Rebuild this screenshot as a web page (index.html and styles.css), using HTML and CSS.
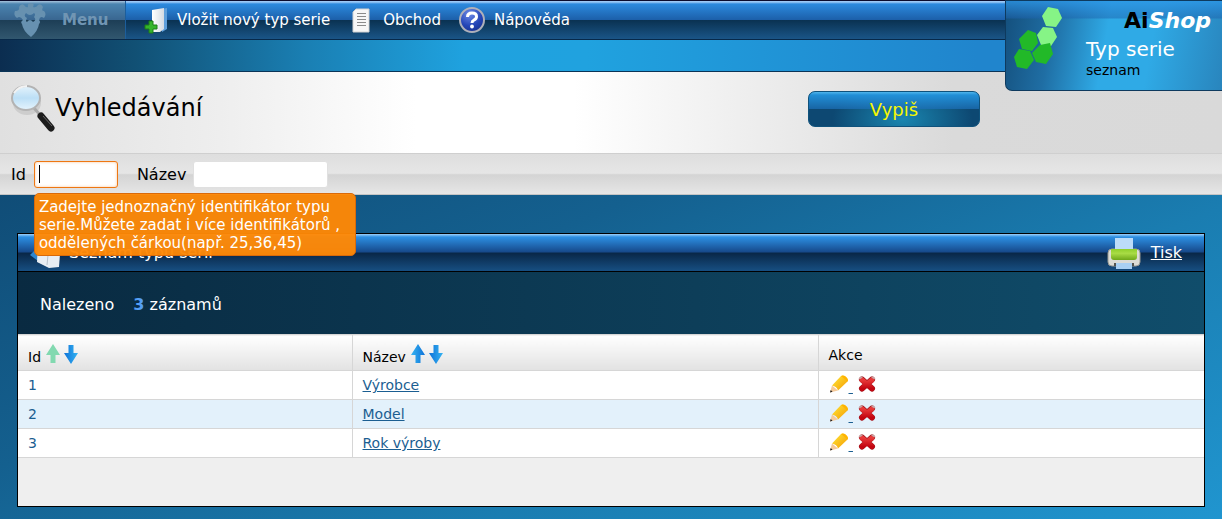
FILE: index.html
```html
<!DOCTYPE html>
<html lang="cs">
<head>
  <meta charset="UTF-8">
  <meta name="viewport" content="width=device-width, initial-scale=1.0">
  <title>AiShop - Typ serie</title>
  <link rel="stylesheet" href="styles.css">
</head>
<body>
  <!-- sdílené ikony -->
  <svg class="sprite" width="0" height="0" aria-hidden="true">
    <defs>
      <linearGradient id="g-arrow" x1="0" x2="1">
        <stop offset="0" stop-color="#35b4f2"/><stop offset="1" stop-color="#0f72d8"/>
      </linearGradient>
      <linearGradient id="g-pencil" x1="0" x2="1" y1="0" y2="1">
        <stop offset="0" stop-color="#ffe93a"/><stop offset="1" stop-color="#f59a00"/>
      </linearGradient>
      <linearGradient id="g-cross" x1="0" x2="0" y1="0" y2="1">
        <stop offset="0" stop-color="#e83a3a"/><stop offset="1" stop-color="#c40510"/>
      </linearGradient>
      <linearGradient id="g-page" x1="0" x2="1">
        <stop offset="0" stop-color="#ffffff"/><stop offset="1" stop-color="#d5dbe2"/>
      </linearGradient>
      <linearGradient id="g-green" x1="0" x2="0" y1="0" y2="1">
        <stop offset="0" stop-color="#8fcf2a"/><stop offset=".4" stop-color="#a9dc45"/><stop offset="1" stop-color="#6fa81a"/>
      </linearGradient>
      <radialGradient id="g-help" cx=".4" cy=".25" r=".8">
        <stop offset="0" stop-color="#6e8be6"/><stop offset=".6" stop-color="#2546b8"/><stop offset="1" stop-color="#16308f"/>
      </radialGradient>
      <linearGradient id="g-lens" x1="0" x2="0" y1="0" y2="1">
        <stop offset="0" stop-color="#e4f3fc"/><stop offset=".5" stop-color="#bcdff6"/><stop offset="1" stop-color="#e6f4fd"/>
      </linearGradient>
    </defs>
    <symbol id="i-arrow" viewBox="0 0 16 20">
      <path d="M8 0 L15 11 H10.500 V19 H5.500 V11 H1 Z"/>
    </symbol>
    <symbol id="i-pencil" viewBox="0 0 20 20">
      <path d="M1 17.500 L3 10.500 L9 15.500 Z" fill="#f5c99a"/>
      <path d="M1 17.500 L1.700 15 L3.500 16.700 Z" fill="#222"/>
      <path d="M3 10.500 L12 1 Q15 -.5 18 3 Q19.500 5 18.500 6.500 L9 15.500 Q8 11.500 3 10.500 Z" fill="url(#g-pencil)"/>
      <path d="M12 1 Q15 -.5 18 3 Q19.500 5 18.500 6.500 Z" fill="#ffb400"/>
    </symbol>
    <symbol id="i-cross" viewBox="0 0 20 20">
      <path d="M5 4.500 L15 13.500 M15 4.500 L5 13.500" stroke="#a3141c" stroke-width="6" stroke-linecap="round"/>
      <path d="M5 5 L15 13.500 M15 5 L5 13.500" stroke="url(#g-cross)" stroke-width="5" stroke-linecap="round"/>
      <path d="M2.500 3.500 L5 2 M15 2 L17.500 3.500" stroke="#c9a3a3" stroke-width="1.500" stroke-linecap="round"/>
    </symbol>
  </svg>

  <header class="top">
    <nav class="toolbar">
      <button class="menu-button" type="button" disabled>
        <svg width="34" height="34" viewBox="0 0 34 34" aria-hidden="true">
          <path d="M6 4 Q8 0 11 2 Q13 5 15 4 Q14 0 18 0 Q22 0 20 4 Q23 5 25 2 Q28 0 30 4 Q28 8 31 8 Q34 11 31 15 Q27 12 26 17 Q28 19 26 21 Q25 28 18 34 Q10 28 9 21 Q7 19 10 17 Q7 12 4 15 Q0 12 2 8 Q7 8 6 4 Z M13 10 Q10 13 14 15 Q12 18 14 19 Q17 15 20 19 Q24 17 21 14 Q23 11 21 10 Q17 14 13 10 Z" fill="#6791b0" fill-rule="evenodd"/>
        </svg>
        <span>Menu</span>
      </button>
      <a class="tool" href="#">
        <svg width="26" height="28" viewBox="0 0 26 28" aria-hidden="true">
          <path d="M19 3 L24 2 V23 L19 26 Z" fill="#5f9fdb"/>
          <path d="M9 4 L21 2 V23 L17 26 L9 26 Z" fill="url(#g-page)"/>
          <path d="M6 15 h4 v4 h4 v4 h-4 v4 h-4 v-4 h-4 v-4 h4 Z" fill="#35b52b" stroke="#1c7d18"/>
        </svg>
        <span>Vložit nový typ serie</span>
      </a>
      <a class="tool" href="#">
        <svg width="28" height="28" viewBox="0 0 28 28" aria-hidden="true">
          <path d="M9 3 H22 V26 H6 V6 Z" fill="#f7f7f7" stroke="#d2d2d2"/>
          <path d="M10 7.500 h9 M10 10.500 h9 M10 13.500 h9 M10 16.500 h9 M10 19.500 h9" stroke="#8b8b8b"/>
        </svg>
        <span>Obchod</span>
      </a>
      <a class="tool" href="#">
        <svg width="28" height="28" viewBox="0 0 28 28" aria-hidden="true">
          <circle cx="14" cy="14" r="12" fill="url(#g-help)" stroke="#aeb0ba" stroke-width="2"/>
          <path d="M9.500 11 Q9.500 7 14 7 Q18.500 7 18.500 10.500 Q18.500 13 16 14 Q14 15 14 17" fill="none" stroke="#fff" stroke-width="3"/>
          <circle cx="14" cy="20.500" r="1.900" fill="#fff"/>
        </svg>
        <span>Nápověda</span>
      </a>
    </nav>
    <div class="strip"></div>

    <div class="badge">
      <svg class="badge-logo" width="52" height="66" viewBox="0 0 52 66" aria-hidden="true">
        <g fill="#86f486">
          <path d="M34 0 L44 2 L48 11 L42 20 L32 19 L28 9 Z"/>
          <path d="M29 20 L39 21 L43 30 L37 39 L27 38 L23 28 Z"/>
        </g>
        <g fill="#22b928">
          <path d="M14 23 L22 26 L24 36 L18 44 L8 42 L5 32 Z"/>
          <path d="M26 38 L36 36 L39 47 L32 57 L22 55 L18 46 Z"/>
          <path d="M5 42 L16 44 L20 53 L13 62 L3 60 L0 50 Z"/>
        </g>
      </svg>
      <div class="badge-text">
        <div class="brand">Ai<em>Shop</em></div>
        <div class="badge-title">Typ serie</div>
        <div class="badge-sub">seznam</div>
      </div>
    </div>
  </header>

  <form class="search">
    <div class="search-head">
      <svg width="46" height="52" viewBox="0 0 46 52" aria-hidden="true">
        <ellipse cx="18" cy="19" rx="14" ry="12" fill="#cdcdcd"/>
        <path d="M25 24 L32 32" stroke="#aaa" stroke-width="3"/>
        <path d="M32 32 L42 44" stroke="#1d1d1d" stroke-width="7" stroke-linecap="round"/>
        <path d="M34 32 L43 42" stroke="#666"/>
        <ellipse cx="17" cy="14" rx="14" ry="12" fill="url(#g-lens)" stroke="#b3b3b3" stroke-width="2"/>
        <path d="M5 9 Q10 2 18 2" fill="none" stroke="#f2f2f2" stroke-width="2"/>
      </svg>
      <h1>Vyhledávání</h1>
      <button class="submit" type="submit">Vypiš</button>
    </div>
    <div class="filters">
      <label for="f-id">Id</label>
      <div class="field">
        <input class="input-id" id="f-id" type="text" aria-describedby="tip-id" autofocus>
        <div class="tip" id="tip-id" role="tooltip">Zadejte jednoznačný identifikátor typu serie.Můžete zadat i více identifikátorů , oddělených čárkou(např. 25,36,45)</div>
      </div>
      <label for="f-name">Název</label>
      <input class="input-name" id="f-name" type="text">
    </div>
  </form>

  <main class="panel">
    <div class="panel-head">
      <svg width="36" height="36" viewBox="0 0 36 36" aria-hidden="true">
        <path d="M2 20 L12 10 L20 18 L10 26 Z" fill="#2f86cf"/>
        <path d="M10 8 L33 6 L31 32 L21 33 L9 27 Z" fill="#e9eef3"/>
        <path d="M19 30 L20 20" stroke="#b9c2cb"/>
      </svg>
      <h2>Seznam typu serií</h2>
      <a class="print" href="#">
        <svg width="34" height="34" viewBox="0 0 34 34" aria-hidden="true">
          <rect x="1" y="13" width="32" height="17" rx="4" fill="#dcdcd6" stroke="#9a9a94"/>
          <rect x="8" y="2" width="18" height="13" fill="#bcdcf8"/>
          <path d="M4 13 H30 V21 Q30 24 27 24 H7 Q4 24 4 21 Z" fill="url(#g-green)"/>
          <rect x="7" y="27" width="20" height="3" fill="#55554f"/>
          <rect x="9" y="27" width="16" height="6" fill="#a9d0f3"/>
        </svg>
        <span>Tisk</span>
      </a>
    </div>
    <p class="found">Nalezeno <b>3</b> záznamů</p>
    <table class="list">
      <colgroup>
        <col class="col-id">
        <col class="col-name">
        <col class="col-action">
      </colgroup>
      <thead>
        <tr>
          <th>Id
            <a href="#" aria-label="Id vzestupně"><svg class="arrow active" width="16" height="20"><use href="#i-arrow"/></svg></a><a href="#" aria-label="Id sestupně"><svg class="arrow down" width="16" height="20"><use href="#i-arrow"/></svg></a>
          </th>
          <th>Název
            <a href="#" aria-label="Název vzestupně"><svg class="arrow" width="16" height="20"><use href="#i-arrow"/></svg></a><a href="#" aria-label="Název sestupně"><svg class="arrow down" width="16" height="20"><use href="#i-arrow"/></svg></a>
          </th>
          <th>Akce</th>
        </tr>
      </thead>
      <tbody>
        <tr>
          <td>1</td>
          <td><a href="#">Výrobce</a></td>
          <td class="actions">
            <a href="#" aria-label="Upravit"><svg width="20" height="20"><use href="#i-pencil"/></svg>&nbsp;</a>
            <a href="#" aria-label="Smazat"><svg width="20" height="20"><use href="#i-cross"/></svg></a>
          </td>
        </tr>
        <tr>
          <td>2</td>
          <td><a href="#">Model</a></td>
          <td class="actions">
            <a href="#" aria-label="Upravit"><svg width="20" height="20"><use href="#i-pencil"/></svg>&nbsp;</a>
            <a href="#" aria-label="Smazat"><svg width="20" height="20"><use href="#i-cross"/></svg></a>
          </td>
        </tr>
        <tr>
          <td>3</td>
          <td><a href="#">Rok výroby</a></td>
          <td class="actions">
            <a href="#" aria-label="Upravit"><svg width="20" height="20"><use href="#i-pencil"/></svg>&nbsp;</a>
            <a href="#" aria-label="Smazat"><svg width="20" height="20"><use href="#i-cross"/></svg></a>
          </td>
        </tr>
      </tbody>
    </table>
    <div class="panel-foot"></div>
  </main>
</body>
</html>
```
FILE: styles.css
```css
* {
  box-sizing: border-box;
}

html {
  min-height: 100%;
  background: linear-gradient(to bottom right, #0d3f66 0%, #14608f 45%, #1a7db1 70%, #2095cf 100%);
}

body {
  margin: 0;
  font-family: Verdana, "DejaVu Sans", sans-serif;
  font-size: 14px;
  color: #000;
}

h1,
h2,
p {
  margin: 0;
  font-weight: normal;
}

svg {
  flex: none;
}

.sprite {
  position: absolute;
}

/* horní lišta */
.top {
  position: relative;
}

.toolbar {
  display: flex;
  height: 40px;
  border-top: 1px solid #0b0b2c;
  border-bottom: 1px solid #07294a;
  background: linear-gradient(to bottom, #9cc8f5 0, #9cc8f5 1px, #2c8ade 3px, #1c5fa9 50%, #0a3252 51%, #1a5587 100%);
}

.menu-button {
  display: flex;
  align-items: center;
  gap: 15px;
  width: 126px;
  padding: 0 0 0 13px;
  border: 0;
  border-right: 1px solid #1c5e9c;
  background: linear-gradient(to bottom, #a9c4dc 0, #4b84b0 3px, #396690 50%, #1d3e56 51%, #31576f 100%);
  color: #7195b3;
  font: bold 15px Verdana, "DejaVu Sans", sans-serif;
}

.tool {
  display: flex;
  align-items: center;
  gap: 8px;
  margin-left: 17px;
  color: #fff;
  font-size: 15px;
  text-decoration: none;
}

.strip {
  height: 32px;
  border-bottom: 1px solid #0a3457;
  background: linear-gradient(to right, #0b2d50 0%, #115074 11%, #1a7fb3 25%, #1fa2df 38%, #20a2df 48%, #2085cd 80%);
}

.badge {
  position: absolute;
  top: 0;
  right: 0;
  display: flex;
  gap: 20px;
  width: 217px;
  height: 91px;
  padding: 6px 11px 0 8px;
  border: 1px solid #0e3a5e;
  border-right: 0;
  border-radius: 0 0 0 7px;
  background:
    linear-gradient(to bottom, rgba(45, 150, 230, .8), rgba(30, 100, 175, .5) 17px, transparent 18px),
    linear-gradient(100deg, #144f7c 0%, #1f6ea4 22%, #2faae6 46%, #2faae6 66%, #2985bd 100%);
}

.badge-text {
  flex: 1;
}

.brand {
  text-align: right;
  font-size: 22px;
  font-weight: bold;
  line-height: 28px;
}

.brand em {
  color: #fff;
}

.badge-title {
  color: #fff;
  font-size: 20px;
  line-height: 28px;
}

.badge-sub {
  line-height: 14px;
}

/* vyhledávání */
.search-head {
  display: flex;
  align-items: flex-start;
  height: 82px;
  padding: 12px 242px 0 9px;
  border-bottom: 1px solid #cfcfcf;
  background: linear-gradient(to right, #e0e0e0 0%, #eee 18%, #fff 34%, #fff 47%, #dadada 78%, #d9d9d9 100%);
}

.search-head h1 {
  font-size: 24px;
  line-height: 48px;
}

.submit {
  width: 172px;
  height: 36px;
  margin: 7px 0 0 auto;
  border: 1px solid #0f527c;
  border-radius: 7px;
  background:
    linear-gradient(to bottom, #4fb5ec 0, rgba(35, 150, 225, .9) 3px, rgba(28, 110, 180, .75) 50%, transparent 51%),
    radial-gradient(ellipse 70px 40px at 55% 80%, #1a86b0, #0d4872);
  color: #f7f700;
  font: 18px Verdana, "DejaVu Sans", sans-serif;
}

.filters {
  display: flex;
  align-items: center;
  height: 41px;
  padding: 0 11px;
  border-bottom: 1px solid #c4c4c4;
  background: linear-gradient(to bottom, #dedede, #e6e6e6 48%, #d4d4d4 52%, #e6e6e6);
  font-size: 16px;
}

.filters input {
  height: 27px;
  padding: 1px 4px;
  border: 1px solid #e0e0e0;
  border-radius: 3px;
  background: #fff;
  font: 16px Verdana, "DejaVu Sans", sans-serif;
}

.filters input:focus {
  outline: 0;
  border-color: #ee7712;
  box-shadow: inset 0 0 3px #f9c698;
}

/* kurzor v prázdném poli */
.filters .input-id:focus:placeholder-shown,
.filters .input-id:focus {
  background: #fff linear-gradient(#000, #000) 4px center / 1px 18px no-repeat;
  caret-color: transparent;
}

.field {
  position: relative;
  display: flex;
  margin: 0 19px 0 8px;
}

.filters .input-id {
  width: 84px;
}

.filters .input-name {
  width: 135px;
  margin-left: 7px;
}

.tip {
  position: absolute;
  z-index: 2;
  top: 32px;
  left: 0;
  width: 322px;
  padding: 4px 4px 3px;
  border: 1px solid #d96a0a;
  border-radius: 5px;
  background: rgba(255, 136, 5, .96);
  color: #fff;
  font-size: 15px;
  line-height: 18px;
}

/* seznam */
.panel {
  margin: 38px 17px 12px;
  border: 1px solid #000;
}

.panel-head {
  display: flex;
  align-items: center;
  height: 38px;
  padding: 0 22px 0 10px;
  border-bottom: 1px solid #000;
  background: linear-gradient(to bottom, #9fd0f8 0, #2c8fe2 3px, #174a8c 48%, #092748 52%, #174f82 100%);
  color: #fff;
}

.panel-head h2 {
  margin-left: 5px;
  font-size: 16px;
}

.print {
  display: flex;
  align-items: center;
  gap: 10px;
  margin-left: auto;
  color: #fff;
  font-size: 16px;
}

.found {
  padding: 3px 22px 0;
  background: linear-gradient(to right, #092a41, #104d6b);
  color: #fff;
  font-size: 16px;
  line-height: 59px;
}

.found b {
  margin-left: 14px;
  color: #559ff5;
}

.list {
  width: 100%;
  border-collapse: collapse;
  table-layout: fixed;
  background: #fff;
  line-height: 18px;
}

.col-id {
  width: 334px;
}

.col-name {
  width: 466px;
}

.list th,
.list td {
  height: 29px;
  padding: 0 10px;
  border: 1px solid #d6d6d6;
  border-width: 1px 0 1px 1px;
  text-align: left;
  font-weight: normal;
}

.list th:first-child,
.list td:first-child {
  border-left: 0;
}

.list th {
  height: 36px;
  padding-top: 4px;
  background: linear-gradient(to bottom, #fff, #e2e2e2);
}

.list th a {
  margin-right: 2px;
}

.list td,
.list td a {
  color: #1b5e91;
}

.list tbody tr:nth-child(even) {
  background: #e3f1fb;
}

.arrow {
  fill: url(#g-arrow);
  vertical-align: -2px;
}

.arrow.down {
  transform: rotate(180deg);
}

.arrow.active {
  fill: #82d9b0;
}

.actions svg {
  vertical-align: -3px;
}

.panel-foot {
  height: 48px;
  background: #efefef;
}
```
